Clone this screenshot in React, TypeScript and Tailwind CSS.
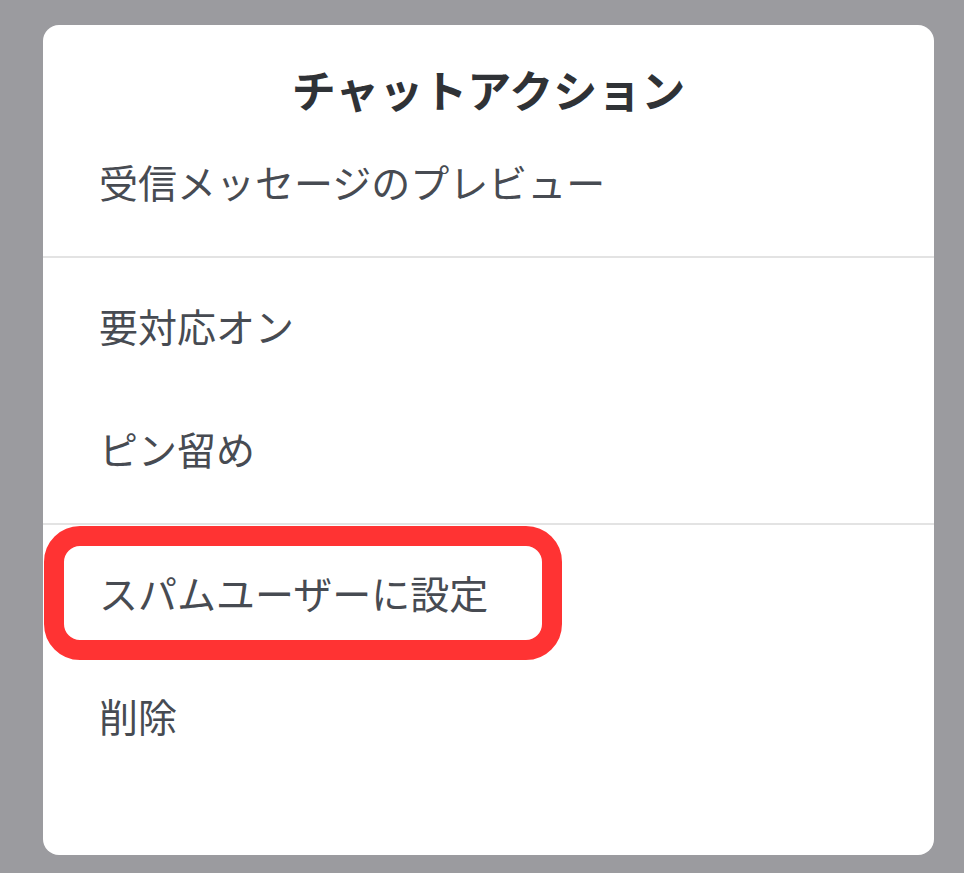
import React from "react";

const font = { fontFamily: '"Noto Sans CJK JP", "Noto Sans", sans-serif' };

function Row({ label, highlight }: { label: string; highlight?: boolean }) {
  return (
    <div className="relative h-[123px] flex items-center pl-[56px] pb-[6px]">
      {highlight && (
        <div className="absolute left-[1px] top-[-8px] w-[518px] h-[134px] border-[20px] border-[#ff3333] rounded-[36px]" />
      )}
      <span className="relative text-[39px] leading-none text-[#474b52]">{label}</span>
    </div>
  );
}

export default function App() {
  return (
    <div className="w-[964px] h-[873px] bg-[#9b9b9f] pt-[25px] pl-[43px]" style={font}>
      <div className="w-[891px] h-[830px] bg-white rounded-[16px] overflow-hidden">
        <div className="h-[98px] pt-[38px] text-center">
          <span className="text-[44px] leading-[52px] font-bold text-[#2f3236]">チャットアクション</span>
        </div>
        <div className="pb-[10px]">
          <Row label="受信メッセージのプレビュー" />
        </div>
        <div className="h-[2px] bg-[#e3e3e3]" />
        <div className="pt-[9px] pb-[10px]">
          <Row label="要対応オン" />
          <Row label="ピン留め" />
        </div>
        <div className="h-[2px] bg-[#e3e3e3]" />
        <div className="pt-[9px]">
          <Row label="スパムユーザーに設定" highlight />
          <Row label="削除" />
        </div>
      </div>
    </div>
  );
}
